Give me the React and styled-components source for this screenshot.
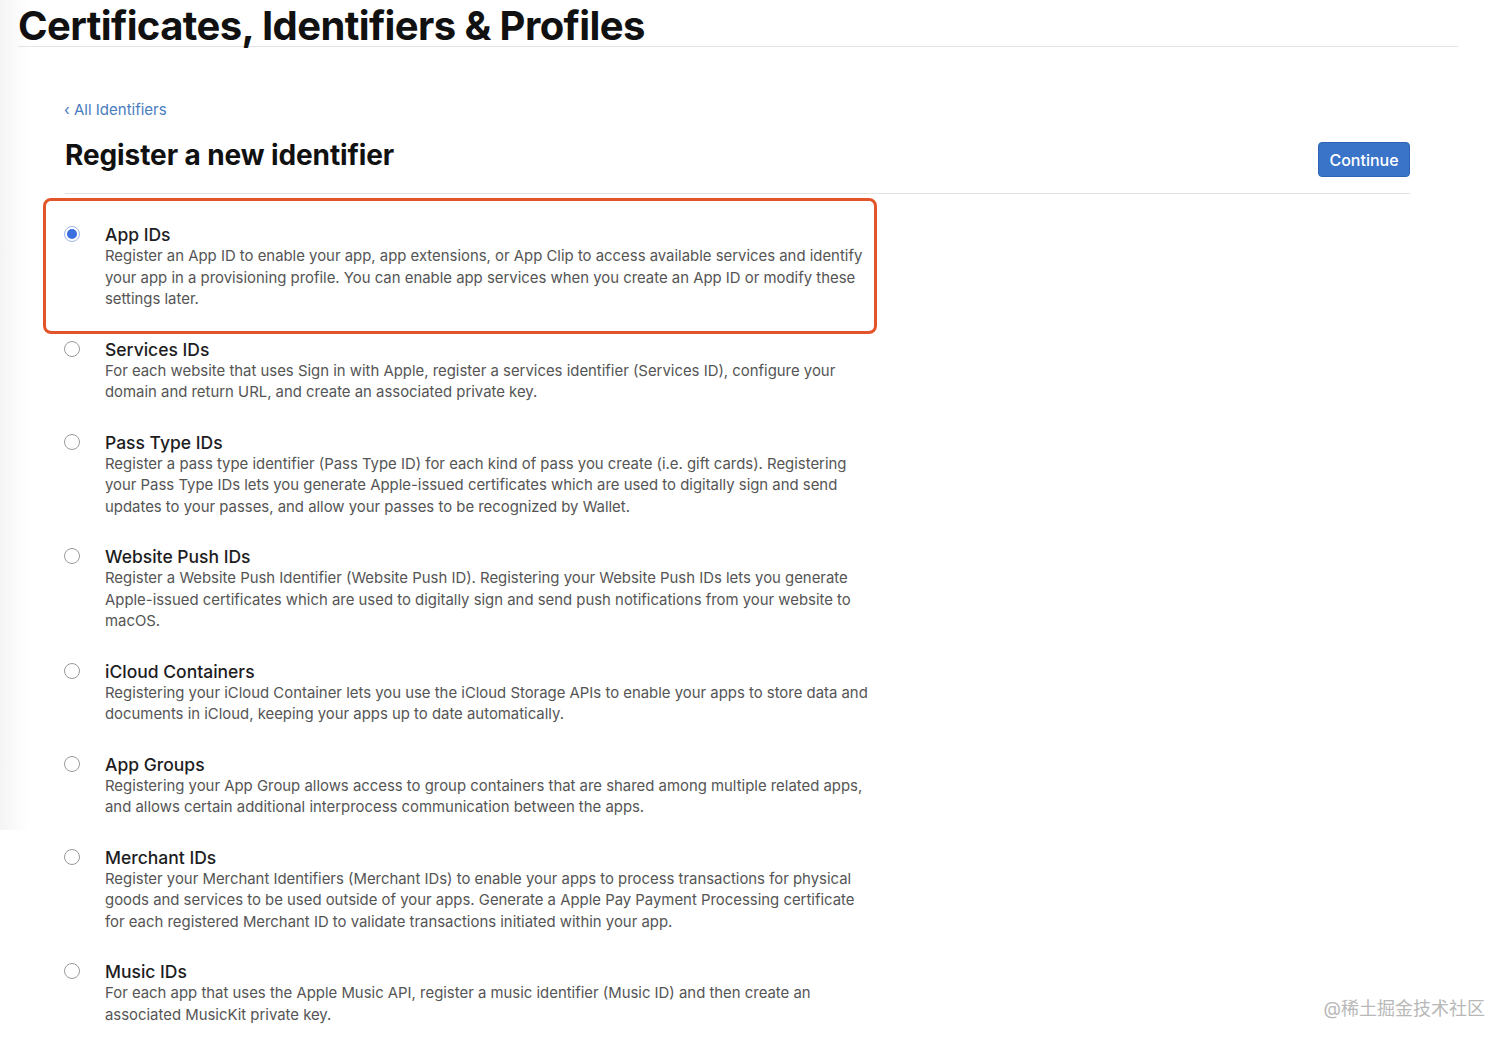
import React from "react";
import styled, { createGlobalStyle } from "styled-components";

const GlobalStyle = createGlobalStyle`
  html, body { margin: 0; padding: 0; background: #fff; }
  body {
    font-family: Inter, "Noto Sans", "Liberation Sans", sans-serif;
    color: #1d1d1f;
    -webkit-font-smoothing: antialiased;
  }
`;

const Page = styled.div`
  position: relative;
  min-height: 1047px;
  overflow: hidden;
  background:
    linear-gradient(to right, #f4f4f4 0px, #fafafa 14px, #ffffff 30px) left top / 30px 830px no-repeat,
    #fff;
`;

const Header = styled.header`
  margin: 0 54px 0 18px;
  border-bottom: 1px solid #e4e4e4;
`;

const PageTitle = styled.h1`
  margin: 0;
  padding-top: 5px;
  font-size: 40px;
  line-height: 41px;
  font-weight: 700;
  letter-spacing: -0.6px;
  color: #111;
`;

const Main = styled.main`
  padding: 53px 102px 0 64px;
`;

const BackLink = styled.a`
  display: block;
  font-size: 15px;
  line-height: 20px;
  color: #4a7cc0;
  text-decoration: none;
`;

const TitleRow = styled.div`
  display: flex;
  justify-content: space-between;
  align-items: flex-start;
  margin: 18px 0 0 1px;
  padding-bottom: 16px;
  border-bottom: 1px solid #e3e3e3;
`;

const Heading = styled.h2`
  margin: 0;
  font-size: 28px;
  line-height: 34px;
  font-weight: 700;
  letter-spacing: -0.1px;
  color: #111;
`;

const Button = styled.button`
  margin-top: 4px;
  width: 92px;
  height: 35px;
  border: 1px solid #2e64b3;
  border-radius: 4px;
  background: #3a74c9;
  color: #fff;
  font-family: inherit;
  font-size: 16px;
  font-weight: 500;
  cursor: pointer;
`;

const List = styled.div`
  display: flex;
  flex-direction: column;
  gap: 27px;
  padding-top: 29px;
`;

const Row = styled.label`
  position: relative;
  display: flex;
  align-items: flex-start;
  gap: 25px;
  cursor: pointer;
`;

const Highlight = styled.span`
  position: absolute;
  left: -21px;
  top: -25px;
  width: 834px;
  height: 136px;
  box-sizing: border-box;
  border: 3px solid #e2552b;
  border-radius: 8px;
  pointer-events: none;
`;

const Radio = styled.span`
  flex: none;
  margin-top: 3px;
  width: 16px;
  height: 16px;
  box-sizing: border-box;
  border-radius: 50%;
  border: 1px solid ${(p) => (p.$checked ? "#9db6e4" : "#9a9a9a")};
  background: #fff;
  display: flex;
  align-items: center;
  justify-content: center;
  &::after {
    content: "";
    width: 10px;
    height: 10px;
    border-radius: 50%;
    background: ${(p) => (p.$checked ? "#3a6fe0" : "transparent")};
  }
`;

const Body = styled.div`
  display: flex;
  flex-direction: column;
`;

const OptionTitle = styled.div`
  font-size: 17.5px;
  line-height: 23px;
  font-weight: 500;
  color: #1d1d1f;
`;

const Desc = styled.div`
  font-size: 14.9px;
  line-height: 21.5px;
  color: #555;
`;

const Line = styled.span`
  display: block;
  white-space: nowrap;
`;

const Watermark = styled.div`
  position: absolute;
  right: 27px;
  top: 996px;
  font-size: 18px;
  line-height: 26px;
  color: #b8b8b8;
  font-family: Inter, "Noto Sans CJK SC", sans-serif;
`;

const options = [
  {
    title: "App IDs",
    checked: true,
    lines: [
      "Register an App ID to enable your app, app extensions, or App Clip to access available services and identify",
      "your app in a provisioning profile. You can enable app services when you create an App ID or modify these",
      "settings later.",
    ],
  },
  {
    title: "Services IDs",
    lines: [
      "For each website that uses Sign in with Apple, register a services identifier (Services ID), configure your",
      "domain and return URL, and create an associated private key.",
    ],
  },
  {
    title: "Pass Type IDs",
    lines: [
      "Register a pass type identifier (Pass Type ID) for each kind of pass you create (i.e. gift cards). Registering",
      "your Pass Type IDs lets you generate Apple-issued certificates which are used to digitally sign and send",
      "updates to your passes, and allow your passes to be recognized by Wallet.",
    ],
  },
  {
    title: "Website Push IDs",
    lines: [
      "Register a Website Push Identifier (Website Push ID). Registering your Website Push IDs lets you generate",
      "Apple-issued certificates which are used to digitally sign and send push notifications from your website to",
      "macOS.",
    ],
  },
  {
    title: "iCloud Containers",
    lines: [
      "Registering your iCloud Container lets you use the iCloud Storage APIs to enable your apps to store data and",
      "documents in iCloud, keeping your apps up to date automatically.",
    ],
  },
  {
    title: "App Groups",
    lines: [
      "Registering your App Group allows access to group containers that are shared among multiple related apps,",
      "and allows certain additional interprocess communication between the apps.",
    ],
  },
  {
    title: "Merchant IDs",
    lines: [
      "Register your Merchant Identifiers (Merchant IDs) to enable your apps to process transactions for physical",
      "goods and services to be used outside of your apps. Generate a Apple Pay Payment Processing certificate",
      "for each registered Merchant ID to validate transactions initiated within your app.",
    ],
  },
  {
    title: "Music IDs",
    lines: [
      "For each app that uses the Apple Music API, register a music identifier (Music ID) and then create an",
      "associated MusicKit private key.",
    ],
  },
];

export default function App() {
  return (
    <Page>
      <GlobalStyle />
      <Header>
        <PageTitle>Certificates, Identifiers &amp; Profiles</PageTitle>
      </Header>
      <Main>
        <BackLink href="#">‹ All Identifiers</BackLink>
        <TitleRow>
          <Heading>Register a new identifier</Heading>
          <Button>Continue</Button>
        </TitleRow>
        <List>
          {options.map((o) => (
            <Row key={o.title}>
              {o.checked && <Highlight />}
              <Radio $checked={o.checked} />
              <Body>
                <OptionTitle>{o.title}</OptionTitle>
                <Desc>
                  {o.lines.map((l) => (
                    <Line key={l}>{l}</Line>
                  ))}
                </Desc>
              </Body>
            </Row>
          ))}
        </List>
      </Main>
      <Watermark>@稀土掘金技术社区</Watermark>
    </Page>
  );
}
